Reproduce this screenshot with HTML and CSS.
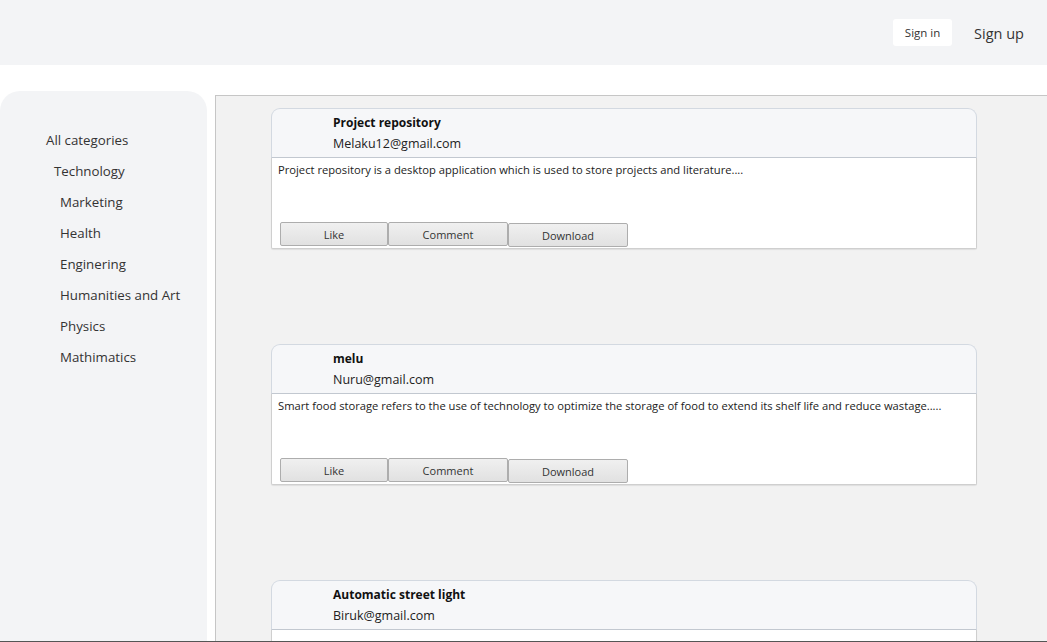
FILE: index.html
```html
<!DOCTYPE html>
<html>
<head>
<meta charset="utf-8">
<link rel="stylesheet" href="styles.css">
</head>
<body>
<header class="topbar">
  <button class="btn-signin">Sign in</button>
  <a class="link-signup">Sign up</a>
</header>
<div class="layout">
  <aside class="sidebar">
    <ul class="cats">
      <li class="cat cat-all">All categories</li>
      <li class="cat cat-tech">Technology</li>
      <li class="cat">Marketing</li>
      <li class="cat">Health</li>
      <li class="cat">Enginering</li>
      <li class="cat">Humanities and Art</li>
      <li class="cat">Physics</li>
      <li class="cat">Mathimatics</li>
    </ul>
  </aside>
  <main class="feed">
    <article class="card">
      <div class="card-head">
        <div class="title">Project repository</div>
        <div class="email">Melaku12@gmail.com</div>
      </div>
      <div class="card-body">
        <p class="desc">Project repository is a desktop application which is used to store projects and literature....</p>
        <div class="actions">
          <button class="act act-like">Like</button>
          <button class="act act-comment">Comment</button>
          <button class="act act-dl">Download</button>
        </div>
      </div>
    </article>
    <article class="card">
      <div class="card-head">
        <div class="title">melu</div>
        <div class="email">Nuru@gmail.com</div>
      </div>
      <div class="card-body">
        <p class="desc">Smart food storage refers to the use of technology to optimize the storage of food to extend its shelf life and reduce wastage.....</p>
        <div class="actions">
          <button class="act act-like">Like</button>
          <button class="act act-comment">Comment</button>
          <button class="act act-dl">Download</button>
        </div>
      </div>
    </article>
    <article class="card">
      <div class="card-head">
        <div class="title">Automatic street light</div>
        <div class="email">Biruk@gmail.com</div>
      </div>
      <div class="card-body"></div>
    </article>
  </main>
</div>
<div class="bottom-edge"></div>
</body>
</html>
```
FILE: styles.css
```css
* { box-sizing: border-box; }
html, body { margin: 0; padding: 0; height: 100%; overflow: hidden; }
body {
  font-family: "Open Sans", "Noto Sans", sans-serif;
  color: #333;
  background: #fff;
}
.topbar {
  height: 65px;
  background: #f3f4f6;
  display: flex;
  align-items: center;
  justify-content: flex-end;
  padding-right: 23px;
  gap: 22px;
}
.btn-signin {
  background: #fff;
  border: none;
  border-radius: 3px;
  width: 59px;
  height: 27px;
  font-family: inherit;
  font-size: 11.5px;
  color: #333;
  padding: 0;
  margin-top: -1px;
}
.link-signup {
  font-size: 14.5px;
  color: #333;
  margin-top: 1px;
}
.layout {
  display: flex;
  padding-top: 26px;
  height: calc(100% - 65px);
}
.sidebar {
  width: 207px;
  flex: none;
  background: #f3f4f6;
  border-radius: 20px;
  height: 600px;
  padding-top: 34px;
}
.cats { list-style: none; margin: 0; padding: 0; }
.cat {
  font-size: 13.3px;
  line-height: 31px;
  padding-left: 60px;
  color: #333;
}
.cat-all { padding-left: 46px; }
.cat-tech { padding-left: 54px; }
.feed {
  margin-left: 8px;
  margin-top: 4px;
  flex: 1;
  background: #f2f2f2;
  border-left: 1px solid #c6c6c6;
  border-top: 1px solid #c6c6c6;
  padding: 12px 0 0 55px;
  display: flex;
  flex-direction: column;
  gap: 95px;
}
.card { width: 706px; flex: none; }
.card-head {
  height: 50px;
  background: #f6f7f9;
  border: 1px solid #d3d9e1;
  border-bottom: 1px solid #c2c8d0;
  border-radius: 9px 9px 0 0;
  padding: 5px 0 0 61px;
}
.title { font-size: 12px; font-weight: 700; color: #111; line-height: 17px; }
.email { font-size: 12.5px; color: #222; line-height: 19px; margin-top: 3px; }
.card-body {
  background: #fff;
  border: 1px solid #cfcfcf;
  border-top: none;
  border-radius: 0 0 2px 2px;
  box-shadow: 0 1px 1px rgba(0,0,0,0.08);
  height: 91px;
  padding: 4px 8px 0 6px;
  display: flex;
  flex-direction: column;
}
.desc { margin: 0; font-size: 11.2px; color: #222; line-height: 15px; }
.actions { margin-top: auto; display: flex; align-items: flex-start; padding-left: 2px; padding-bottom: 2px; }
.act {
  font-family: inherit;
  font-size: 11px;
  color: #333;
  height: 24px;
  padding: 0;
  border: 1px solid #adadad;
  border-radius: 2px;
  background: linear-gradient(#f0f0f0, #e1e1e1);
}
.act-like { width: 108px; }
.act-comment { width: 120px; }
.act-dl { width: 120px; margin-top: 1px; margin-bottom: -1px; }
.bottom-edge {
  position: fixed;
  left: 0; right: 0; bottom: 0;
  height: 1px;
  background: #555;
}
```
